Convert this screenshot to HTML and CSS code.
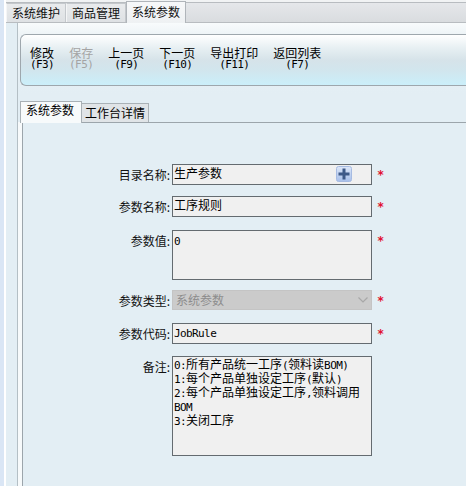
FILE: index.html
```html
<!DOCTYPE html>
<html lang="zh-CN">
<head>
<meta charset="utf-8">
<title>系统参数</title>
<link rel="stylesheet" href="styles.css">
</head>
<body>
<div class="frame">
  <div class="topbar">
    <div class="ttab">系统维护</div>
    <div class="ttab">商品管理</div>
    <div class="ttab active">系统参数</div>
  </div>
  <div class="body">
    <div class="panel">
      <div class="tbwrap">
        <div class="toolbar">
          <div class="tb-btn"><span class="tb-cn">修改</span><span class="tb-key">(F3)</span></div>
          <div class="tb-btn disabled"><span class="tb-cn">保存</span><span class="tb-key">(F5)</span></div>
          <div class="tb-btn"><span class="tb-cn">上一页</span><span class="tb-key">(F9)</span></div>
          <div class="tb-btn"><span class="tb-cn">下一页</span><span class="tb-key">(F10)</span></div>
          <div class="tb-btn"><span class="tb-cn">导出打印</span><span class="tb-key">(F11)</span></div>
          <div class="tb-btn"><span class="tb-cn">返回列表</span><span class="tb-key">(F7)</span></div>
        </div>
      </div>
      <div class="subtabs">
        <div class="stab active">系统参数</div>
        <div class="stab">工作台详情</div>
      </div>
      <div class="content">
        <div class="content-inner">
          <div class="row r1">
            <label class="lbl">目录名称:</label>
            <div class="field input">生产参数<span class="plus"><svg width="16" height="16" viewBox="0 0 16 16"><defs><linearGradient id="pg" x1="0" y1="0" x2="0" y2="1"><stop offset="0" stop-color="#dde7f8"/><stop offset="1" stop-color="#a7bfea"/></linearGradient></defs><rect x="0.5" y="0.5" width="15" height="15" rx="2" fill="url(#pg)" stroke="#a6bbe2"/><path d="M8 2.5v11M2.5 8h11" stroke="#3e5a88" stroke-width="3"/></svg></span></div>
            <span class="req">*</span>
          </div>
          <div class="row r2">
            <label class="lbl">参数名称:</label>
            <div class="field input">工序规则</div>
            <span class="req">*</span>
          </div>
          <div class="row r3">
            <label class="lbl">参数值:</label>
            <div class="field ta ta1"><span class="a">0</span></div>
            <span class="req">*</span>
          </div>
          <div class="row r4">
            <label class="lbl">参数类型:</label>
            <div class="field select">系统参数<span class="chev"><svg width="10" height="6" viewBox="0 0 10 6"><path d="M0.5 0.5L5 5L9.5 0.5" fill="none" stroke="#a8a8a8" stroke-width="1.2"/></svg></span></div>
            <span class="req">*</span>
          </div>
          <div class="row r5">
            <label class="lbl">参数代码:</label>
            <div class="field input"><span class="a">JobRule</span></div>
            <span class="req">*</span>
          </div>
          <div class="row r6">
            <label class="lbl">备注:</label>
            <div class="field ta ta2"><span class="a">0:</span>所有产品统一工序<span class="a">(</span>领料读<span class="a">BOM)</span><br><span class="a">1:</span>每个产品单独设定工序<span class="a">(</span>默认<span class="a">)</span><br><span class="a">2:</span>每个产品单独设定工序<span class="a">,</span>领料调用<br><span class="a">BOM</span><br><span class="a">3:</span>关闭工序</div>
          </div>
        </div>
      </div>
    </div>
  </div>
</div>
</body>
</html>
```

FILE: styles.css
```css
* { box-sizing: border-box; }
html, body { margin: 0; height: 100%; }
body {
  background: #dae6f5;
  font-family: "Noto Sans CJK SC", sans-serif;
  font-size: 12px;
  color: #000;
  overflow: hidden;
}
.frame {
  margin-left: 4px;
  border-left: 2px solid #fff;
  height: 486px;
  display: flex;
  flex-direction: column;
  background: #e3eef4;
}
.topbar {
  height: 23px;
  flex: none;
  display: flex;
  align-items: flex-end;
  background: linear-gradient(#f1f3f4 0, #f1f3f4 2px, #b8bcc0 2px, #b8bcc0 3px, #e5e7ea 3px, #d9dcdf 100%);
  border-bottom: 1px solid #b8bcc0;
}
.ttab {
  width: 60px;
  height: 19px;
  text-align: center;
  line-height: 18px;
  border: 1px solid #c4c8cc;
  border-bottom: none;
  border-left-color: #f4f5f6;
  background: linear-gradient(#e9ebed, #dee1e4);
  color: #111;
}
.ttab.active {
  height: 22px;
  margin-bottom: -1px;
  line-height: 20px;
  background: linear-gradient(#f7f8f9, #eef1f3);
  border-color: #b0b5ba;
}
.body {
  flex: 1;
  display: flex;
  padding-left: 11px;
}
.panel {
  flex: 1;
  display: flex;
  flex-direction: column;
  border-left: 1px solid #b4bfc5;
  padding-left: 2px;
  background: #e3eef4;
}
.tbwrap {
  padding: 11px 0 15px;
  margin-left: -2px;
  padding-left: 2px;
  background: linear-gradient(#f8fbfc 0, #eef4f7 11px, #e3eef4 70px);
}
.toolbar {
  height: 52px;
  border: 1px solid #9ea7ad;
  border-right: none;
  border-radius: 6px 0 0 6px;
  background: linear-gradient(#ffffff 0%, #e8f0f3 25%, #d6e3e9 50%, #d1e6ee 72%, #cbeffa 100%);
  display: flex;
  gap: 15px;
  padding: 12px 0 0 9px;
}
.tb-btn {
  display: flex;
  flex-direction: column;
  align-items: center;
  line-height: 12px;
  color: #000;
}
.tb-btn.disabled { color: #a4a4a4; }
.tb-key, .a {
  font-family: "DejaVu Sans Mono", monospace;
  font-size: 11px;
  letter-spacing: -0.6px;
}
.subtabs {
  height: 21px;
  display: flex;
  align-items: flex-end;
}
.stab {
  height: 19px;
  line-height: 18px;
  padding: 0 3px;
  border: 1px solid #a9b1b6;
  border-bottom: none;
  border-left: none;
  background: #e0e4e7;
}
.stab.active {
  height: 22px;
  margin-bottom: -1px;
  line-height: 16px;
  padding: 0 7px 0 5px;
  border-left: 1px solid #a9b1b6;
  background: #f7fafb;
  position: relative;
  z-index: 1;
}
.content {
  flex: 1;
  display: flex;
  margin-left: -2px;
  border-left: 4px solid #f7fafb;
}
.content-inner {
  flex: 1;
  border-left: 1px solid #9ca5ab;
  border-top: 1px solid #9ca5ab;
  padding-top: 41px;
  background: #e3eef4;
}
.row {
  display: flex;
  align-items: flex-start;
}
.r1 { margin-bottom: 11px; }
.r2 { margin-bottom: 13px; }
.r3 { margin-bottom: 10px; }
.r4 { margin-bottom: 12px; }
.r5 { margin-bottom: 12px; }
.lbl {
  width: 149px;
  height: 21px;
  text-align: right;
  padding-right: 2px;
  line-height: 21px;
  color: #111;
}
.field {
  width: 200px;
  border: 1px solid #646b70;
  background: #f0f0f0;
  padding: 1px;
  line-height: 14px;
  position: relative;
}
.input { height: 21px; }
.ta1 { height: 50px; padding-top: 2px; }
.ta2 { height: 100px; line-height: 12px; padding-top: 1px; }
.select {
  height: 20px;
  background: #cbcbcb;
  border-color: #c4c4c4;
  color: #8d8d8d;
  padding: 1px 3px 0;
  line-height: 16px;
}
.chev {
  position: absolute;
  right: 3px;
  top: 6px;
  width: 10px;
  height: 6px;
  display: block;
}
.chev svg, .plus svg { display: block; }
.plus {
  position: absolute;
  right: 19px;
  top: 1px;
  width: 16px;
  height: 16px;
}
.req {
  color: #e1112f;
  margin-left: 5px;
  height: 20px;
  line-height: 19px;
  padding-top: 2px;
  font-family: "DejaVu Sans Mono", monospace;
  font-size: 12px;
  font-weight: bold;
  overflow: visible;
}
```
